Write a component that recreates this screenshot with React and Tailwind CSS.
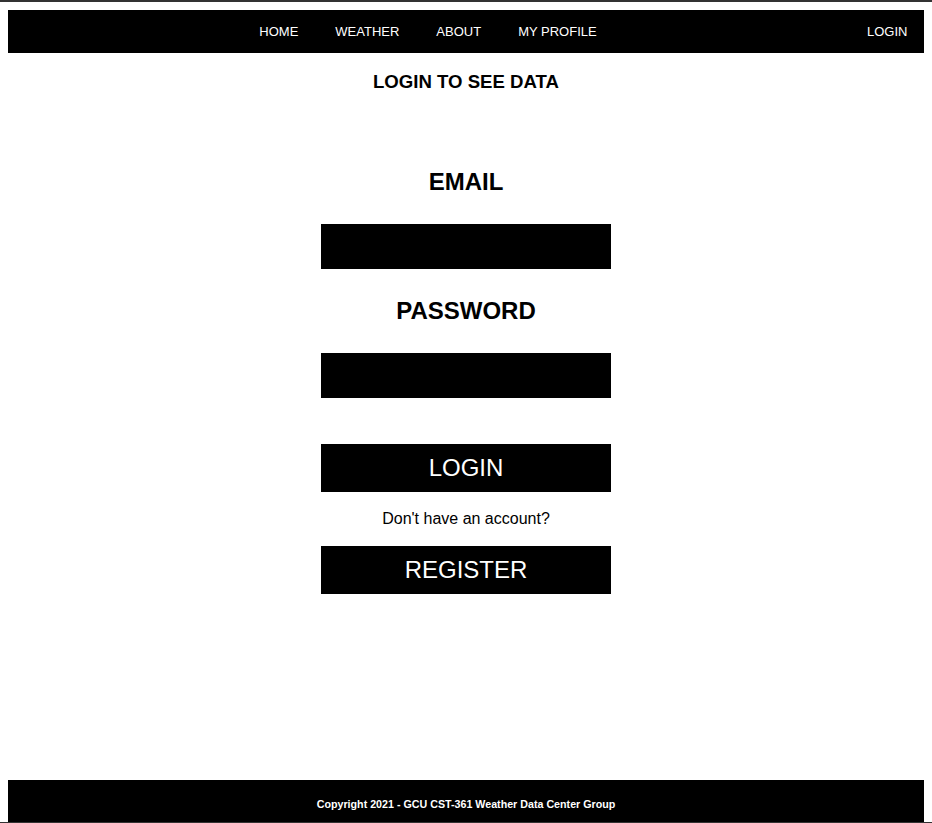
import { useState } from 'react';

const links = ['HOME', 'WEATHER', 'ABOUT', 'MY PROFILE'];

export default function App() {
  const [email, setEmail] = useState('');
  const [password, setPassword] = useState('');

  return (
    <div className="h-[823px] flex flex-col bg-white border-t-2 border-b border-[#333333] px-2 pt-2 font-['Liberation_Sans',Arial,sans-serif] text-black">
      <nav className="h-[43px] bg-black flex items-center text-white text-[13px]">
        <ul className="flex-1 flex justify-center gap-[37px] pr-[2px]">
          {links.map((l) => (
            <li key={l}>
              <a href="#" className="text-white">{l}</a>
            </li>
          ))}
        </ul>
        <a href="#" className="w-[74px] pl-[17px] text-white">LOGIN</a>
      </nav>

      <main className="flex-1 flex flex-col items-center">
        <h3 className="mt-[18px] text-[18.6px] leading-[22px] font-bold">LOGIN TO SEE DATA</h3>

        <form className="flex flex-col items-center" onSubmit={(e) => e.preventDefault()}>
          <h2 className="mt-[75px] text-[24px] leading-[28px] font-bold">EMAIL</h2>
          <input
            type="email"
            value={email}
            onChange={(e) => setEmail(e.target.value)}
            className="mt-[28px] h-[45px] w-[290px] bg-black text-white px-3 outline-none"
          />
          <h2 className="mt-[28px] text-[24px] leading-[28px] font-bold">PASSWORD</h2>
          <input
            type="password"
            value={password}
            onChange={(e) => setPassword(e.target.value)}
            className="mt-[28px] h-[45px] w-[290px] bg-black text-white px-3 outline-none"
          />
          <button type="submit" className="mt-[46px] h-[48px] w-[290px] bg-black text-white text-[24px] leading-[28px]">
            LOGIN
          </button>
          <p className="mt-[17px] text-[16px] leading-[20px]">Don't have an account?</p>
          <button type="button" className="mt-[17px] h-[48px] w-[290px] bg-black text-white text-[24px] leading-[28px]">
            REGISTER
          </button>
        </form>
      </main>

      <footer className="h-[42px] bg-black flex items-center justify-center pt-[6px]">
        <p className="text-white text-[10.7px] leading-[13px] font-bold">
          Copyright 2021 - GCU CST-361 Weather Data Center Group
        </p>
      </footer>
    </div>
  );
}
